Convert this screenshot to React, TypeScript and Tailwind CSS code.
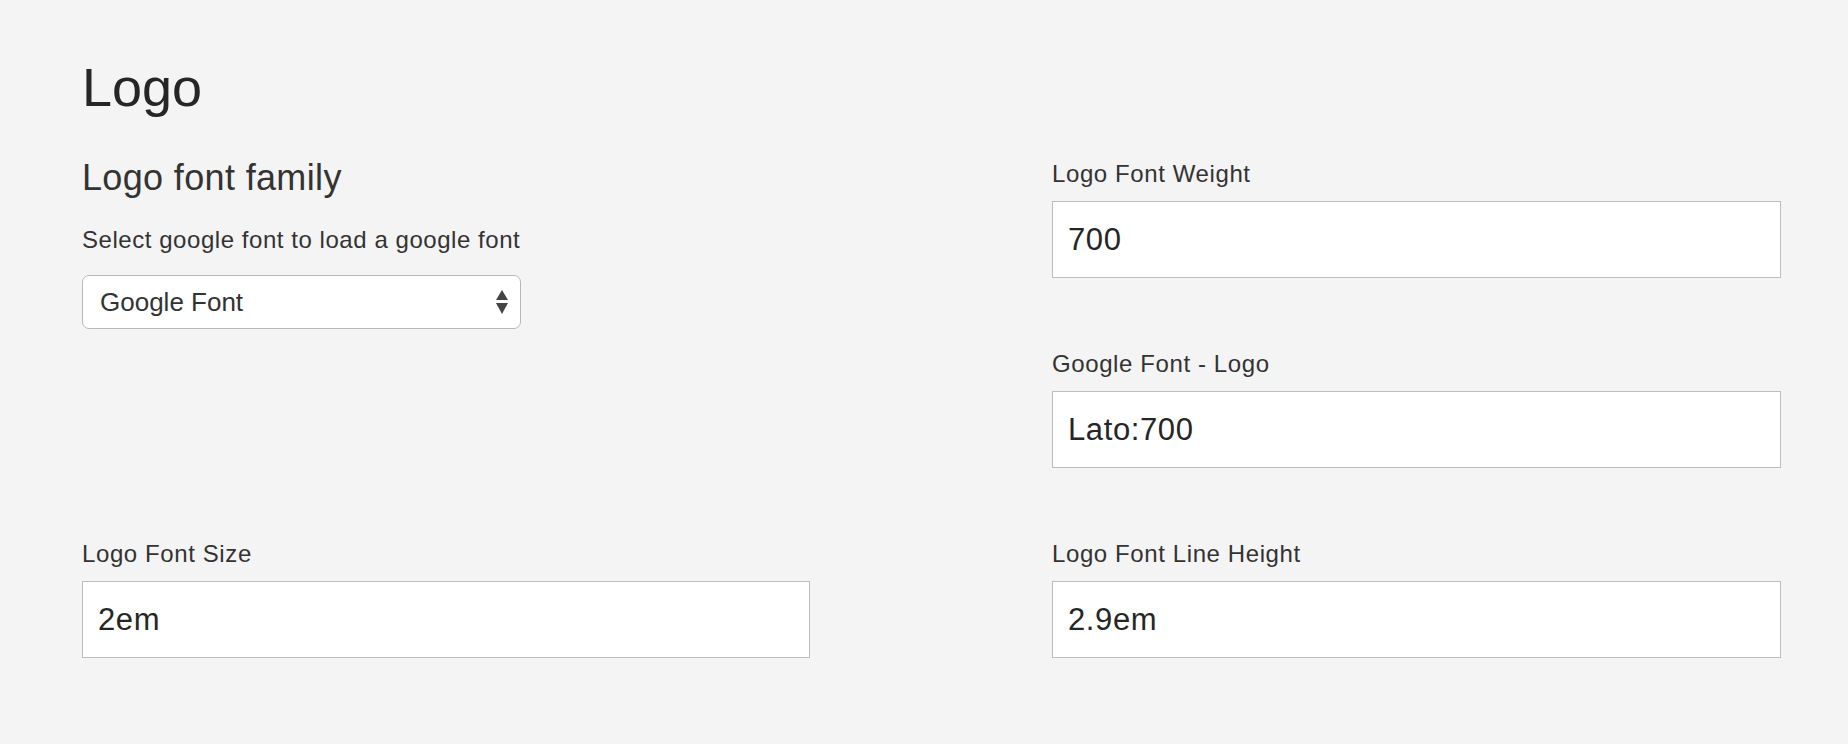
import { useState } from "react";

const FONT = { fontFamily: '"Liberation Sans", Arial, Helvetica, sans-serif' };

function Field({ label, value, width = "w-full" }: { label: string; value: string; width?: string }) {
  const [v, setV] = useState(value);
  return (
    <div className="flex flex-col">
      <label className="mb-[9px] text-[24px] leading-[36px] tracking-[0.6px] text-[#333]">{label}</label>
      <input
        className={`${width} h-[77px] border border-[#bdbdbd] bg-white pl-[15px] text-[31px] tracking-[0.6px] text-[#262626] outline-none`}
        value={v}
        onChange={(e) => setV(e.target.value)}
      />
    </div>
  );
}

export default function App() {
  return (
    <div className="min-h-[744px] bg-[#f4f4f4] pl-[82px] pt-[58px]" style={FONT}>
      <h1 className="mb-[39px] text-[54px] leading-[59px] font-normal text-[#262626]">Logo</h1>

      <div className="grid grid-cols-[970px_729px] gap-y-[68px]">
        {/* font family */}
        <div className="flex flex-col">
          <h3 className="mt-[2px] text-[36px] leading-[40px] tracking-[0.35px] font-normal text-[#333]">Logo font family</h3>
          <p className="mt-[24px] text-[24px] leading-[36px] tracking-[0.55px] text-[#333]">Select google font to load a google font</p>
          <div className="relative mt-[17px] w-[439px]">
            <select className="h-[54px] w-full appearance-none rounded-[7px] border-[1.5px] border-[#b8b8b8] bg-white pl-[17px] text-[26px] text-[#333] outline-none">
              <option>Google Font</option>
            </select>
            <svg
              className="pointer-events-none absolute right-[13px] top-[15px]"
              width="12"
              height="24"
              viewBox="0 0 12 24"
            >
              <path d="M6 0 L12 10 L0 10 Z" fill="#444" />
              <path d="M0 13 L12 13 L6 24 Z" fill="#444" />
            </svg>
          </div>
        </div>

        {/* weight + google font */}
        <div className="flex flex-col gap-[68px]">
          <Field label="Logo Font Weight" value="700" />
          <Field label="Google Font - Logo" value="Lato:700" />
        </div>

        <Field label="Logo Font Size" value="2em" width="w-[728px]" />
        <Field label="Logo Font Line Height" value="2.9em" />
      </div>
    </div>
  );
}
